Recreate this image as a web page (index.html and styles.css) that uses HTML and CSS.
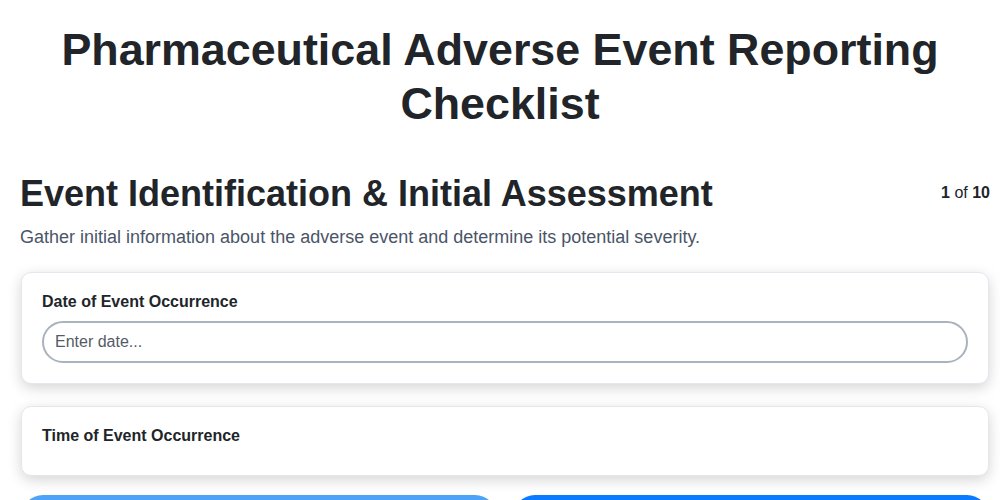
FILE: index.html
```html
<!DOCTYPE html>
<html lang="en">
<head>
<meta charset="utf-8">
<title>Pharmaceutical Adverse Event Reporting Checklist</title>
<link rel="stylesheet" href="styles.css">
</head>
<body>
  <h1 class="page-title">Pharmaceutical Adverse Event Reporting Checklist</h1>
  <main class="step">
    <div class="step-header">
      <h2 class="step-title">Event Identification &amp; Initial Assessment</h2>
      <div class="step-count"><strong>1</strong> of <strong>10</strong></div>
    </div>
    <p class="step-desc">Gather initial information about the adverse event and determine its potential severity.</p>
    <div class="card">
      <label class="field-label" for="date">Date of Event Occurrence</label>
      <input class="field-input" id="date" type="text" placeholder="Enter date...">
    </div>
    <div class="card">
      <label class="field-label">Time of Event Occurrence</label>
    </div>
    <div class="nav">
      <button class="btn btn-prev">Previous</button>
      <button class="btn btn-next">Next</button>
    </div>
  </main>
</body>
</html>
```
FILE: styles.css
```css
* { box-sizing: border-box; }
html, body { margin: 0; padding: 0; background: #ffffff; }
body {
  font-family: "Liberation Sans", Arial, sans-serif;
  color: #212529;
}
.page-title {
  margin: 23px 0 0;
  font-size: 44.8px;
  line-height: 1.2;
  font-weight: 700;
  text-align: center;
  padding: 0 40px;
}
.step {
  padding: 0 10px 0 20px;
  margin-top: 41px;
}
.step-header {
  display: flex;
  justify-content: space-between;
  align-items: center;
}
.step-title {
  margin: 0;
  font-size: 36px;
  line-height: 1.2;
  font-weight: 700;
}
.step-count {
  font-size: 16px;
  color: #212529;
}
.step-desc {
  margin: 12px 0 24px;
  font-size: 18px;
  color: #4a5568;
}
.card {
  background: #fff;
  border: 1px solid #e6e6ee;
  border-radius: 10px;
  box-shadow: 0 4px 14px rgba(0, 0, 0, 0.17);
  padding: 20px;
  margin: 0 1px 22px;
}
.field-label {
  display: block;
  font-size: 16px;
  font-weight: 700;
  margin-bottom: 10px;
}
.field-input {
  display: block;
  width: 100%;
  font-family: "Liberation Sans", Arial, sans-serif;
  font-size: 16px;
  padding: 10px 11px;
  border: 2px solid #aab3bd;
  border-radius: 999px;
  color: #212529;
  background: #fff;
  outline: none;
}
.field-input::placeholder { color: #555b66; }
.nav {
  display: flex;
  gap: 16px;
  margin: -3px 1px 0;
}
.btn {
  flex: 1;
  height: 44px;
  border: none;
  border-radius: 999px;
  font-family: "Liberation Sans", Arial, sans-serif;
  font-size: 16px;
  font-weight: 700;
  color: #fff;
}
.btn-prev { background: #4da3f8; }
.btn-next { background: #0a7bff; }
```
